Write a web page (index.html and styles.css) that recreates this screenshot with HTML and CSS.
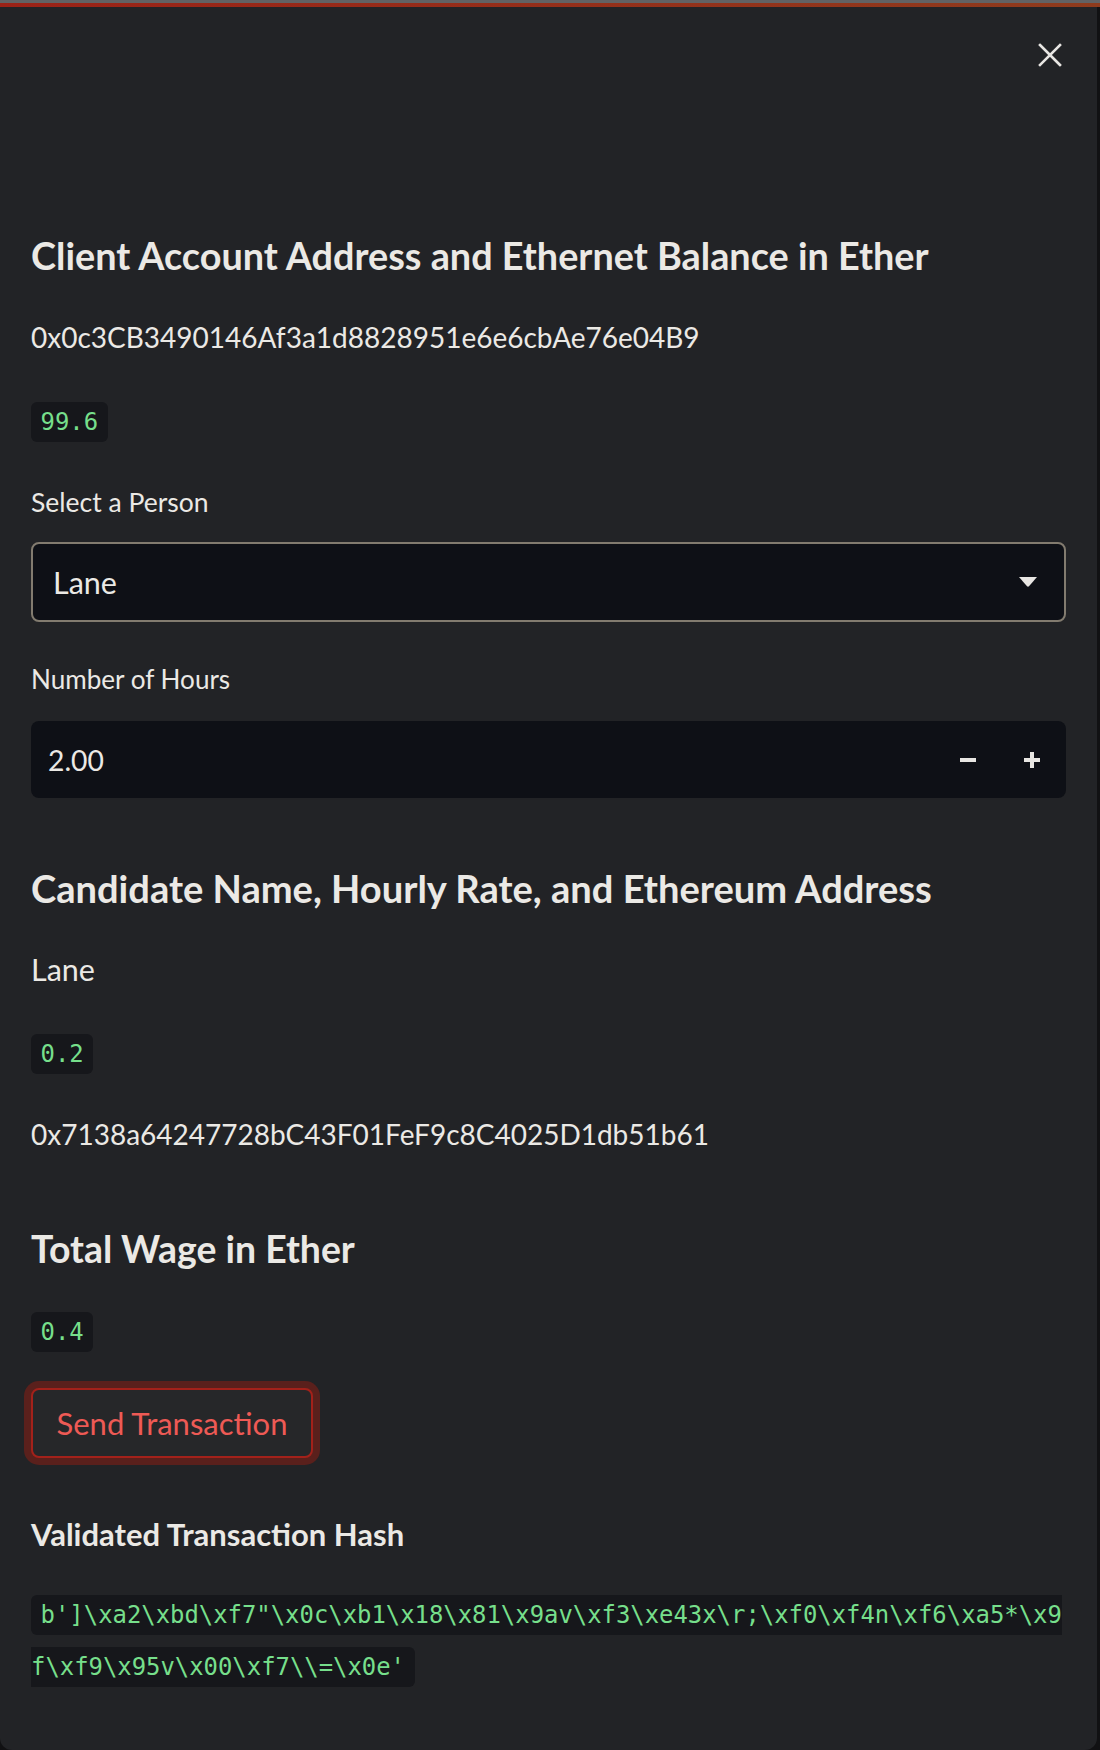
FILE: index.html
```html
<!DOCTYPE html>
<html lang="en">
<head>
<meta charset="utf-8">
<title>Pay Candidate</title>
<link rel="stylesheet" href="styles.css">
</head>
<body>
<div class="page">
  <div class="topbar-gray"></div>
  <div class="topbar-red"></div>
  <div class="panel">
    <div class="panel-head">
      <button class="close" aria-label="Close">
        <svg width="24" height="24" viewBox="0 0 24 24"><path d="M2 2 L22 22 M22 2 L2 22" stroke="#e8e6e3" stroke-width="2.6" stroke-linecap="square" fill="none"/></svg>
      </button>
    </div>
    <div class="content">
      <h3 class="heading h-client">Client Account Address and Ethernet Balance in Ether</h3>
      <p class="text addr-client">0x0c3CB3490146Af3a1d8828951e6e6cbAe76e04B9</p>
      <div class="code-row row-balance"><code class="pill">99.6</code></div>

      <label class="field-label label-person">Select a Person</label>
      <div class="select">
        <span class="select-value">Lane</span>
        <svg class="caret" width="18" height="10" viewBox="0 0 18 10"><path d="M0 0 H18 L10 9.3 Q9 10.2 8 9.3 Z" fill="#e8e6e3"/></svg>
      </div>

      <label class="field-label label-hours">Number of Hours</label>
      <div class="number">
        <span class="number-value">2.00</span>
        <div class="steppers">
          <button class="step" aria-label="Decrement"><svg width="16" height="16" viewBox="0 0 16 16"><rect x="0" y="6" width="16" height="4" fill="#e8e6e3"/></svg></button>
          <button class="step" aria-label="Increment"><svg width="16" height="16" viewBox="0 0 16 16"><rect x="0" y="6" width="16" height="4" fill="#e8e6e3"/><rect x="6" y="0" width="4" height="16" fill="#e8e6e3"/></svg></button>
        </div>
      </div>

      <h3 class="heading h-candidate">Candidate Name, Hourly Rate, and Ethereum Address</h3>
      <p class="text name-candidate">Lane</p>
      <div class="code-row row-rate"><code class="pill">0.2</code></div>
      <p class="text addr-candidate">0x7138a64247728bC43F01FeF9c8C4025D1db51b61</p>

      <h3 class="heading h-wage">Total Wage in Ether</h3>
      <div class="code-row row-wage"><code class="pill">0.4</code></div>

      <button class="send">Send Transaction</button>

      <p class="strong">Validated Transaction Hash</p>
      <p class="hash"><code class="hash-code">b']\xa2\xbd\xf7"\x0c\xb1\x18\x81\x9av\xf3\xe43x\r;\xf0\xf4n\xf6\xa5*\x9f\xf9\x95v\x00\xf7\\=\x0e'</code></p>
    </div>
  </div>
</div>
</body>
</html>
```

FILE: styles.css
```css
html, body {
  margin: 0;
  padding: 0;
}

body {
  background: #111113;
  font-family: Lato, "Liberation Sans", sans-serif;
  color: #ebe9e5;
}

.page {
  width: 1100px;
  height: 1750px;
  overflow: hidden;
}

.topbar-gray {
  height: 3px;
  background: #626264;
}

.topbar-red {
  height: 4px;
  background: linear-gradient(90deg, #9b2217, #8e3b1d);
}

.panel {
  width: 1097px;
  height: 1743px;
  background: #222326;
  border-radius: 0 0 12px 12px;
}

.panel-head {
  display: flex;
  justify-content: flex-end;
  padding: 36px 35px 0 0;
}

.close {
  display: block;
  width: 24px;
  height: 24px;
  padding: 0;
  border: 0;
  background: none;
}

.close svg {
  display: block;
}

.content {
  width: 1035px;
  padding-left: 31px;
}

.heading {
  margin: 0;
  font-size: 37.8px;
  line-height: 48px;
  font-weight: 700;
  color: #ebe9e5;
}

.text {
  margin: 0;
  font-size: 28px;
  line-height: 40px;
}

.name-candidate {
  font-size: 30.5px;
}

.field-label {
  display: block;
  font-size: 26.5px;
  line-height: 32px;
}

.label-hours {
  font-size: 26.1px;
}

.code-row {
  height: 40px;
}

.pill,
.hash-code {
  font-family: "DejaVu Sans Mono", "Liberation Mono", monospace;
  font-size: 23.9px;
  color: #76df8b;
  background: #16171b;
  border-radius: 6px;
}

.pill {
  display: inline-block;
  line-height: 28px;
  padding: 6px 9.6px;
}

.h-client { margin-top: 165px; }
.addr-client { margin-top: 37px; }
.row-balance { margin-top: 45px; }
.label-person { margin-top: 44px; }

.select {
  margin-top: 24px;
  height: 80px;
  box-sizing: border-box;
  border: 2px solid #827b6f;
  border-radius: 8px;
  background: #0e1016;
  display: flex;
  align-items: center;
  justify-content: space-between;
  padding: 0 27px 0 20px;
}

.select-value {
  font-size: 30.5px;
}

.caret {
  display: block;
}

.label-hours { margin-top: 41px; }

.number {
  margin-top: 26px;
  height: 77px;
  border-radius: 8px;
  background: #0e1016;
  display: flex;
  align-items: center;
  justify-content: space-between;
  padding: 0 2px 0 17px;
}

.number-value {
  font-size: 28.3px;
}

.steppers {
  display: flex;
  height: 100%;
}

.step {
  width: 64px;
  height: 100%;
  padding: 0;
  border: 0;
  background: none;
  display: flex;
  align-items: center;
  justify-content: center;
}

.h-candidate { margin-top: 66px; font-size: 38.1px; }
.name-candidate { margin-top: 37px; }
.row-rate { margin-top: 45px; }
.addr-candidate { margin-top: 40px; }
.h-wage { margin-top: 71px; font-size: 37.4px; }
.row-wage { margin-top: 39px; }

.send {
  display: block;
  margin-top: 36px;
  width: 282px;
  height: 70px;
  box-sizing: border-box;
  border: 2px solid #a3211a;
  border-radius: 8px;
  background: #262729;
  box-shadow: 0 0 0 7px #5a201c;
  color: #ee5a55;
  font-family: Lato, "Liberation Sans", sans-serif;
  font-size: 31px;
  padding: 0;
}

.strong {
  margin: 58px 0 0;
  font-size: 31px;
  line-height: 36px;
  font-weight: 700;
}

.hash {
  margin: 37px 0 0;
  font-family: "DejaVu Sans Mono", "Liberation Mono", monospace;
  font-size: 23.9px;
  line-height: 52px;
  word-break: break-all;
}

.hash-code {
  padding: 6px 9.6px;
}
```
